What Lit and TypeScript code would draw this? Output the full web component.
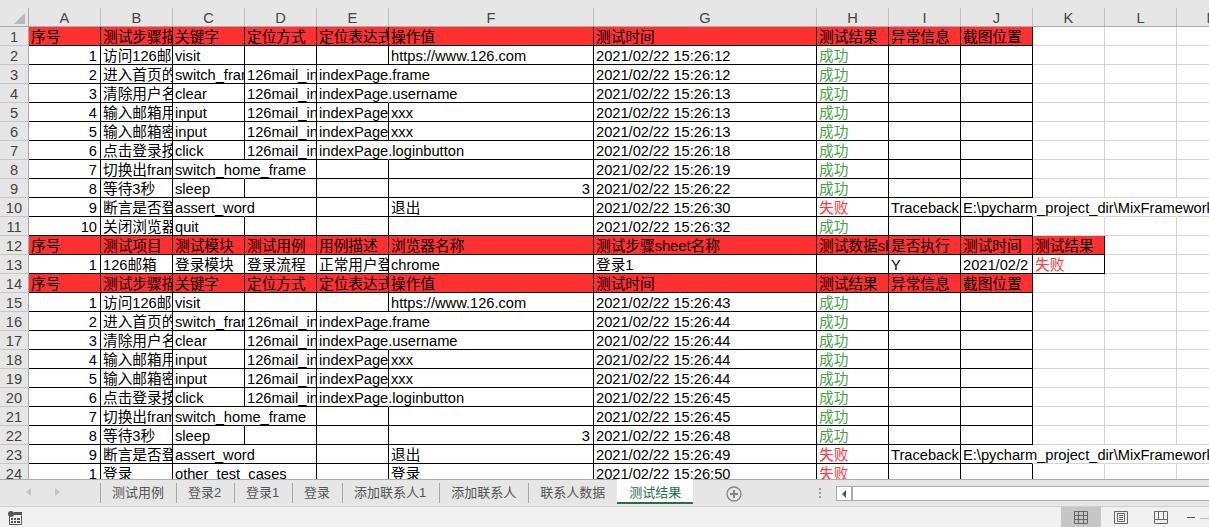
import { LitElement, html, css, svg } from "lit";
import { customElement } from "lit/decorators.js";

type Row = { cells: string[]; spill?: number[]; kind?: "head" | "head2" };

const COLS = ["A", "B", "C", "D", "E", "F", "G", "H", "I", "J", "K", "L", "M"];
const HEAD = ["序号", "测试步骤描述", "关键字", "定位方式", "定位表达式", "操作值", "测试时间", "测试结果", "异常信息", "截图位置"];
const HEAD2 = ["序号", "测试项目", "测试模块", "测试用例", "用例描述", "浏览器名称", "测试步骤sheet名称", "测试数据sheet名称", "是否执行", "测试时间", "测试结果"];
const DIR = "E:\\pycharm_project_dir\\MixFramework";

function step(n: string, title: string, kw: string, d: string, e: string, f: string, t: string, res = "成功", extra: string[] = ["", ""]) {
  return [n, title, kw, d, e, f, `2021/02/22 ${t}`, res, ...extra];
}

function batch(t: string[]): Row[] {
  return [
    { cells: step("1", "访问126邮箱", "visit", "", "", "https://www.126.com", t[0]) },
    { cells: step("2", "进入首页的frame", "switch_frame", "126mail_indexPage", "indexPage.frame", "", t[1]), spill: [4] },
    { cells: step("3", "清除用户名", "clear", "126mail_indexPage", "indexPage.username", "", t[2]), spill: [4] },
    { cells: step("4", "输入邮箱用户名", "input", "126mail_indexPage", "indexPage.username", "xxx", t[3]) },
    { cells: step("5", "输入邮箱密码", "input", "126mail_indexPage", "indexPage.password", "xxx", t[4]) },
    { cells: step("6", "点击登录按钮", "click", "126mail_indexPage", "indexPage.loginbutton", "", t[5]), spill: [4] },
    { cells: step("7", "切换出frame", "switch_home_frame", "", "", "", t[6]), spill: [2] },
    { cells: step("8", "等待3秒", "sleep", "", "", "3", t[7]) },
  ];
}

const ROWS: Row[] = [
  { cells: HEAD, kind: "head" },
  ...batch(["15:26:12", "15:26:12", "15:26:13", "15:26:13", "15:26:13", "15:26:18", "15:26:19", "15:26:22"]),
  {
    cells: step("9", "断言是否登录成功", "assert_word", "", "", "退出", "15:26:30", "失败", ["Traceback", DIR]),
    spill: [2, 9, 10, 11, 12],
  },
  { cells: step("10", "关闭浏览器", "quit", "", "", "", "15:26:32") },
  { cells: HEAD2, kind: "head2" },
  { cells: ["1", "126邮箱", "登录模块", "登录流程", "正常用户登录", "chrome", "登录1", "", "Y", "2021/02/2", "失败"] },
  { cells: HEAD, kind: "head" },
  ...batch(["15:26:43", "15:26:44", "15:26:44", "15:26:44", "15:26:44", "15:26:45", "15:26:45", "15:26:48"]),
  {
    cells: step("9", "断言是否登录成功", "assert_word", "", "", "退出", "15:26:49", "失败", ["Traceback", DIR]),
    spill: [2, 9, 10, 11, 12],
  },
  { cells: step("1", "登录", "other_test_cases", "", "", "登录", "15:26:50", "失败"), spill: [2] },
];

const TABS = ["测试用例", "登录2", "登录1", "登录", "添加联系人1", "添加联系人", "联系人数据", "测试结果"];

@customElement("app-root")
export class AppRoot extends LitElement {
  static styles = css`
    :host {
      display: block;
      width: 1209px;
      height: 527px;
      overflow: hidden;
      background: #f1f1f1;
      font-family: "Liberation Sans", "Noto Sans CJK SC", sans-serif;
    }
    .top { height: 8px; background: #e6e6e6; }
    .colhead, .sheet {
      display: grid;
      grid-template-columns: 29px repeat(5, 72px) 205px 223px repeat(6, 72px);
      width: 1249px;
    }
    .colhead { height: 19px; grid-auto-rows: 19px; background: #e6e6e6; }
    .colhead > div {
      box-sizing: border-box;
      border-right: 1px solid #bdbdbd;
      border-bottom: 1px solid #ababab;
      font-size: 14.67px;
      line-height: 20px;
      text-align: center;
      color: #444;
    }
    .corner { position: relative; border-right-color: #ababab !important; }
    .tri {
      position: absolute;
      right: 3px;
      bottom: 2px;
      width: 0;
      height: 0;
      border-left: 11px solid transparent;
      border-bottom: 11px solid #b8b8b8;
    }
    .sheet {
      height: 452px;
      overflow: hidden;
      grid-auto-rows: 19px;
      background: #fff;
    }
    .rh {
      box-sizing: border-box;
      background: #e6e6e6;
      border-right: 1px solid #ababab;
      border-bottom: 1px solid #c6c6c6;
      font-size: 14.67px;
      line-height: 20px;
      text-align: center;
      color: #444;
    }
    .c {
      box-sizing: border-box;
      border-right: 1px solid #d4d4d4;
      border-bottom: 1px solid #d4d4d4;
      font-size: 14.67px;
      line-height: 21px;
      padding: 0 3px 0 2px;
      white-space: nowrap;
      overflow: hidden;
      color: #000;
    }
    .c.b { border-right-color: #000; border-bottom-color: #000; }
    .c.red { background: #ff3030; }
    .c.num { text-align: right; }
    .c.spill { overflow: visible; border-right-color: transparent; }
    .c.ok { color: #3fa63f; }
    .c.fail { color: #ff3a3a; }

    .tabs {
      box-sizing: border-box;
      height: 28px;
      background: #e6e6e6;
      border-top: 1px solid #ababab;
      border-bottom: 1px solid #d0d0d0;
      display: flex;
      align-items: flex-start;
      position: relative;
    }
    .nav { width: 100px; flex: none; display: flex; align-items: center; height: 24px; padding-left: 26px; box-sizing: border-box; gap: 24px; }
    .tab {
      box-sizing: border-box;
      height: 20px;
      margin-top: 3px;
      padding: 0 12px 0 11px;
      border-left: 1px solid #a6a6a6;
      font-size: 13px;
      line-height: 19px;
      color: #555;
      white-space: nowrap;
      flex: none;
    }
    .tab.digit { padding-right: 12.8px; }
    .tab.on {
      height: 25px;
      margin-top: -1px;
      padding: 4px 12px 0 12px;
      border-left: 0;
      background: #fff;
      border-bottom: 2px solid #217346;
      color: #217346;
    }
    .add { margin: 6px 0 0 33px; flex: none; width: 16px; height: 16px; }
    .dots { position: absolute; left: 819px; top: 8px; display: flex; flex-direction: column; gap: 2px; }
    .dots i { display: block; width: 2px; height: 2px; background: #999; }
    .scroll {
      position: absolute;
      left: 836px;
      right: 0;
      top: 6px;
      height: 15px;
      box-sizing: border-box;
      background: #fff;
      border: 1px solid #ababab;
      border-right: 0;
      display: flex;
    }
    .arrow {
      width: 14px;
      border-right: 2px solid #ababab;
      display: flex;
      align-items: center;
      justify-content: center;
    }
    .status { height: 20px; background: #f1f1f1; position: relative; display: flex; align-items: stretch; }
    .status .macro { margin: 4px 0 0 8px; width: 14px; height: 14px; flex: none; }
    .views { margin-left: auto; display: flex; align-items: stretch; width: 148px; }
    .view { width: 40px; box-sizing: border-box; padding-top: 1px; display: flex; align-items: center; justify-content: center; flex: none; }
    .view.on { background: #c6c6c6; }
    .zoom { flex: 1; position: relative; }
    .minus { position: absolute; left: 6px; top: 10px; width: 8px; height: 1px; background: #555; }
    .track { position: absolute; left: 19px; right: 0; top: 11px; height: 1px; background: #bbb; }
  `;

  private cell(text: string, r: Row, i: number) {
    const head = !!r.kind;
    const inside = i < r.cells.length && i < 11 && (i < 10 || r.kind === "head2" || !!r.cells[10]);
    const spill = r.spill?.includes(i);
    const isNum = !head && (i === 0 || text === "3");
    const res = !head && (text === "成功" ? "ok" : text === "失败" ? "fail" : "");
    const cls = ["c"];
    if (inside || i < 10) cls.push("b");
    if (head && inside) cls.push("red");
    if (isNum) cls.push("num");
    if (spill) cls.push("spill");
    if (res) cls.push(res as string);
    return html`<div class=${cls.join(" ")}>${text}</div>`;
  }

  private icon(kind: string) {
    if (kind === "normal") {
      return svg`<svg width="14" height="13" viewBox="0 0 14 13" fill="none" stroke="#666"><path d="M.5.5h13v12H.5zM.5 4.5h13M.5 8.5h13M4.5.5v12M9.5.5v12"/></svg>`;
    }
    if (kind === "layout") {
      return svg`<svg width="14" height="13" viewBox="0 0 14 13" fill="none" stroke="#666"><path d="M.5.5h13v12H.5zM3.5 2.5h7v8h-7zM5 4.5h4M5 6.5h4M5 8.5h4"/></svg>`;
    }
    return svg`<svg width="14" height="13" viewBox="0 0 14 13" fill="none" stroke="#666"><path d="M.5.5h13v12H.5zM.5 8.5h13M4.5.5v8M9.5.5v8"/></svg>`;
  }

  render() {
    return html`
      <div class="top"></div>
      <div class="colhead">
        <div class="corner"><span class="tri"></span></div>
        ${COLS.map((c) => html`<div>${c}</div>`)}
      </div>
      <div class="sheet">
        ${ROWS.map((r, ri) => {
          const full = COLS.map((_, i) => r.cells[i] ?? "");
          return html`<div class="rh">${ri + 1}</div>${full.map((t, i) => this.cell(t, r, i))}`;
        })}
      </div>
      <div class="tabs">
        <div class="nav">
          <svg width="5" height="8" viewBox="0 0 5 8"><path d="M5 0v8L0 4z" fill="#c4c4c4"/></svg>
          <svg width="5" height="8" viewBox="0 0 5 8"><path d="M0 0v8l5-4z" fill="#c4c4c4"/></svg>
        </div>
        ${TABS.map((t, i) => html`<div class="tab ${i === TABS.length - 1 ? "on" : ""} ${/\d$/.test(t) ? "digit" : ""}">${t}</div>`)}
        <svg class="add" viewBox="0 0 16 16" fill="none" stroke="#858585">
          <circle cx="8" cy="8" r="7" stroke-width="1.3"/>
          <path d="M4 8h8M8 4v8" stroke-width="2"/>
        </svg>
        <div class="dots"><i></i><i></i><i></i></div>
        <div class="scroll">
          <div class="arrow"><svg width="4" height="8" viewBox="0 0 4 8"><path d="M4 0v8L0 4z" fill="#555"/></svg></div>
        </div>
      </div>
      <div class="status">
        <svg class="macro" viewBox="0 0 14 14">
          <path d="M6 1h8v3H6z" fill="#555"/>
          <path d="M1.5 5.5v8h12v-9" fill="none" stroke="#555"/>
          <circle cx="3" cy="3" r="3" fill="#555"/>
          <path d="M3 7h2v2H3zM6 7h2v2H6zM9 7h3v2H9zM3 10h2v2H3zM6 10h2v2H6zM9 10h3v2H9z" fill="#555"/>
        </svg>
        <div class="views">
          <div class="view on">${this.icon("normal")}</div>
          <div class="view">${this.icon("layout")}</div>
          <div class="view">${this.icon("page")}</div>
          <div class="zoom"><div class="minus"></div><div class="track"></div></div>
        </div>
      </div>
    `;
  }
}
